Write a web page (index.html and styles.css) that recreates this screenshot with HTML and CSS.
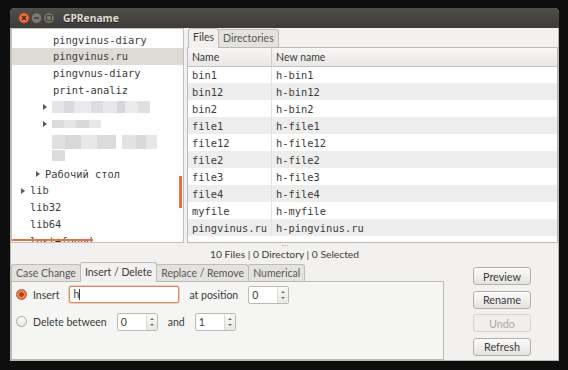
FILE: index.html
```html
<!DOCTYPE html>
<html>
<head>
<meta charset="utf-8">
<title>GPRename</title>
<link rel="stylesheet" href="styles.css">
</head>
<body>
<div class="window">
  <div class="titlebar">
    <svg class="wbtns" width="40" height="12" viewBox="0 0 40 12">
      <circle cx="6" cy="6" r="5.2" fill="#ec6d3f" stroke="#8f3f1f" stroke-width="0.8"/>
      <path d="M4 4 L8 8 M8 4 L4 8" stroke="#40200f" stroke-width="1.3"/>
      <circle cx="18.5" cy="6" r="5.2" fill="#7b7a75" stroke="#4a4944" stroke-width="0.8"/>
      <path d="M16 6 H21" stroke="#3e3d39" stroke-width="1.3"/>
      <circle cx="31" cy="6" r="5.2" fill="#7b7a75" stroke="#4a4944" stroke-width="0.8"/>
      <rect x="28.6" y="3.6" width="4.8" height="4.8" fill="none" stroke="#3e3d39" stroke-width="1"/>
    </svg>
    <span class="title">GPRename</span>
  </div>
  <div class="content">
    <div class="top">
      <div class="tree">
        <div class="row i53"><span class="exp"></span>pingvinus-diary</div>
        <div class="row i53 sel"><span class="exp"></span>pingvinus.ru</div>
        <div class="row i53"><span class="exp"></span>pingvnus-diary</div>
        <div class="row i53"><span class="exp"></span>print-analiz</div>
        <div class="row i52"><span class="exp arrow"></span><span class="blur b1"></span></div>
        <div class="row i52"><span class="exp arrow"></span><span class="blur b2"></span></div>
        <div class="row i52"><span class="exp"></span><span class="blur b3"></span><span class="blur b4"></span></div>
        <div class="row i52"><span class="exp"></span><span class="blur b5"></span></div>
        <div class="row i45"><span class="exp arrow"></span>Рабочий стол</div>
        <div class="row i30"><span class="exp arrow"></span>lib</div>
        <div class="row i30"><span class="exp"></span>lib32</div>
        <div class="row i30"><span class="exp"></span>lib64</div>
        <div class="row i30"><span class="exp"></span>lost+found</div>
        <span class="oscroll-v"></span>
        <span class="oscroll-h"></span>
      </div>
      <div class="nb files">
        <div class="tabs">
          <span class="tab active">Files</span><span class="tab">Directories</span>
        </div>
        <div class="panel">
          <table class="list">
            <thead>
              <tr><th class="c1">Name</th><th>New name</th></tr>
            </thead>
            <tbody>
              <tr><td class="c1">bin1</td><td>h-bin1</td></tr>
              <tr><td class="c1">bin12</td><td>h-bin12</td></tr>
              <tr><td class="c1">bin2</td><td>h-bin2</td></tr>
              <tr><td class="c1">file1</td><td>h-file1</td></tr>
              <tr><td class="c1">file12</td><td>h-file12</td></tr>
              <tr><td class="c1">file2</td><td>h-file2</td></tr>
              <tr><td class="c1">file3</td><td>h-file3</td></tr>
              <tr><td class="c1">file4</td><td>h-file4</td></tr>
              <tr><td class="c1">myfile</td><td>h-myfile</td></tr>
              <tr><td class="c1">pingvinus.ru</td><td>h-pingvinus.ru</td></tr>
            </tbody>
          </table>
        </div>
      </div>
    </div>
    <div class="status">
      <span class="grip"></span>
      <span class="status-text">10 Files | 0 Directory | 0 Selected</span>
    </div>
    <div class="bottom">
      <div class="nb ops">
        <div class="tabs">
          <span class="tab">Case Change</span><span class="tab active">Insert / Delete</span><span class="tab">Replace / Remove</span><span class="tab">Numerical</span>
        </div>
        <div class="panel opspanel">
          <div class="oprow">
            <span class="radio on"></span>
            <span class="lbl">Insert</span>
            <span class="entry focus">h<span class="caret"></span></span>
            <span class="lbl">at position</span>
            <span class="spin"><span class="val">0</span><span class="arrows"><i class="up"></i><i class="dn"></i></span></span>
          </div>
          <div class="oprow">
            <span class="radio"></span>
            <span class="lbl">Delete between</span>
            <span class="spin"><span class="val">0</span><span class="arrows"><i class="up"></i><i class="dn"></i></span></span>
            <span class="lbl">and</span>
            <span class="spin"><span class="val">1</span><span class="arrows"><i class="up"></i><i class="dn"></i></span></span>
          </div>
        </div>
      </div>
      <div class="actions">
        <button class="btn">Preview</button>
        <button class="btn">Rename</button>
        <button class="btn" disabled>Undo</button>
        <button class="btn">Refresh</button>
      </div>
    </div>
  </div>
</div>
</body>
</html>
```

FILE: styles.css
```css
* { box-sizing: border-box; }
html, body { margin: 0; padding: 0; }
body {
  background: #0e0e0e;
  width: 568px;
  height: 370px;
  overflow: hidden;
  font-family: Lato, "Noto Sans", sans-serif;
  font-size: 10.5px;
  color: #3c3c3c;
}
.window {
  margin: 8px 0 0 10px;
  width: 549px;
  height: 353px;
  background: #f2f1f0;
  border-radius: 5px 5px 0 0;
  overflow: hidden;
  display: flex;
  flex-direction: column;
}
.titlebar {
  height: 20px;
  flex: none;
  background: linear-gradient(#4f4e4a, #3d3c38);
  display: flex;
  align-items: center;
  padding-left: 8px;
}
.wbtns { display: block; }
.title {
  margin-left: 5px;
  color: #dfdbd2;
  font-family: "Noto Sans", sans-serif;
  font-weight: bold;
  font-size: 10.3px;
  text-shadow: 0 1px 0 #222;
}
.content {
  flex: 1;
  display: flex;
  flex-direction: column;
  border: 1px solid #bab7b1;
  border-top: none;
}
.top {
  height: 215px;
  flex: none;
  display: flex;
  gap: 3px;
}
.tree {
  position: relative;
  width: 173px;
  flex: none;
  background: #fff;
  border: 1px solid #c4c1bc;
  padding-top: 2.5px;
  overflow: hidden;
  font-family: "DejaVu Sans Mono", monospace;
  font-size: 10.4px;
}
.row {
  height: 16.75px;
  line-height: 16.75px;
  display: flex;
  align-items: center;
  white-space: nowrap;
}
.row.sel { background: #dedbd6; }
.i53 { padding-left: 31px; }
.i52 { padding-left: 30px; }
.i45 { padding-left: 23px; }
.i30 { padding-left: 8px; }
.exp {
  width: 10px;
  flex: none;
  display: flex;
  align-items: center;
  height: 100%;
}
.exp.arrow::before {
  content: "";
  display: block;
  width: 0;
  height: 0;
  margin-left: 1px;
  border-left: 4px solid #5a5a5a;
  border-top: 3px solid transparent;
  border-bottom: 3px solid transparent;
}
.blur { display: inline-block; height: 12px; }
.b1 {
  width: 98px;
  background: linear-gradient(90deg, #e4e5e8 0 12%, #d9dadd 12% 22%, #e9eaec 22% 40%, #dcdde0 40% 52%, #e6e7e9 52% 66%, #d6d7da 66% 74%, #ebebed 74% 88%, #dedfe1 88% 100%);
}
.b2 {
  width: 49px;
  height: 8px;
  background: linear-gradient(90deg, #dcdcde 0 25%, #e6e6e8 25% 50%, #d8d8da 50% 75%, #e8e8ea 75% 100%);
}
.b3 {
  width: 64px;
  height: 14px;
  margin-top: 3px;
  background: linear-gradient(90deg, #e0e0e2 0 20%, #d8d8da 20% 45%, #e8e8ea 45% 70%, #dbdbdd 70% 100%);
}
.b4 {
  width: 35px;
  height: 14px;
  margin-left: 6px;
  margin-top: 3px;
  background: linear-gradient(90deg, #e2e2e4 0 40%, #d9d9db 40% 70%, #e7e7e9 70% 100%);
}
.b5 {
  width: 13px;
  height: 11px;
  margin-top: -4px;
  background: #dcdcde;
}
.oscroll-v {
  position: absolute;
  left: 167px;
  top: 147px;
  width: 3px;
  height: 32px;
  background: #e9703f;
}
.oscroll-h {
  position: absolute;
  left: 0;
  bottom: 1px;
  width: 81px;
  height: 2px;
  background: #e9703f;
}
.nb {
  display: flex;
  flex-direction: column;
}
.files { flex: 1; }
.tabs {
  display: flex;
  align-items: flex-end;
  height: 19px;
  flex: none;
  padding-left: 1px;
  position: relative;
  z-index: 1;
}
.tab {
  height: 18px;
  padding: 0 4px;
  line-height: 17px;
  background: #e4e2df;
  color: #585858;
  border: 1px solid #c0bdb8;
  border-bottom: none;
  border-radius: 3px 3px 0 0;
  white-space: nowrap;
}
.tab + .tab { margin-left: -1px; }
.tab.active {
  height: 20px;
  margin-bottom: -1px;
  background: #f2f1f0;
  color: #3c3c3c;
}
.panel {
  flex: 1;
  border: 1px solid #bcb9b3;
  background: #fff;
  overflow: hidden;
}
.list {
  width: 100%;
  border-collapse: collapse;
  font-family: "DejaVu Sans Mono", monospace;
  font-size: 10.4px;
}
.list th {
  height: 18px;
  text-align: left;
  font-family: Lato, "Noto Sans", sans-serif;
  font-weight: normal;
  font-size: 10.5px;
  padding: 0 4px;
  background: linear-gradient(#f7f6f5, #e8e7e5);
  border-bottom: 1px solid #c4c2bd;
}
.list th.c1 { border-right: 1px solid #d2d0cb; }
.list td {
  height: 17px;
  padding: 0 4px;
  white-space: nowrap;
}
.list td.c1 { width: 81px; border-right: 1px solid #e2e2e2; }
.list tbody tr:nth-child(even) { background: #ededed; }
.status {
  height: 19px;
  flex: none;
  display: flex;
  flex-direction: column;
  align-items: center;
  padding-top: 2px;
}
.grip {
  width: 6px;
  height: 2px;
  border-top: 1px dotted #b8b6b1;
}
.status-text { line-height: 13px; margin-top: 1px; font-size: 10.3px; }
.bottom {
  flex: 1;
  display: flex;
}
.ops { width: 433px; flex: none; }
.ops .tabs { padding-left: 0; }
.ops .tab { height: 17px; line-height: 16px; padding: 0 4px; }
.ops .tab.active { height: 20px; line-height: 19px; }
.opspanel {
  background: #f5f5f4;
  padding: 4px 0 0 4px;
  display: flex;
  flex-direction: column;
  gap: 10px;
}
.oprow {
  display: flex;
  align-items: center;
  height: 17px;
  gap: 10px;
}
.radio {
  width: 11px;
  height: 11px;
  border-radius: 50%;
  border: 1px solid #a8a5a0;
  background: linear-gradient(#fdfdfd, #e9e8e6);
  margin-right: -4px;
  flex: none;
}
.radio.on {
  border-color: #b9552c;
  background: radial-gradient(circle, #a8431d 0 2px, #f38a5e 2.5px, #e8683a 100%);
}
.entry {
  width: 110px;
  height: 17px;
  border: 1px solid #d9896a;
  border-radius: 2px;
  background: #fff;
  box-shadow: 0 0 0 0.5px #efa889;
  padding-left: 3px;
  line-height: 15px;
  display: flex;
  align-items: center;
}
.caret {
  display: inline-block;
  width: 1px;
  height: 11px;
  background: #3c3c3c;
  margin-left: 0;
}
.spin {
  width: 41px;
  height: 18px;
  border: 1px solid #bdbab4;
  border-radius: 2px;
  background: #fff;
  display: flex;
}
.spin .val {
  flex: 1;
  padding-left: 3px;
  line-height: 16px;
}
.spin .arrows {
  width: 11px;
  border-left: 1px solid #dcdad6;
  background: linear-gradient(#f8f8f7, #e9e8e6);
  display: flex;
  flex-direction: column;
  align-items: center;
  justify-content: center;
  gap: 4px;
}
.arrows i {
  width: 0;
  height: 0;
  border-left: 2px solid transparent;
  border-right: 2px solid transparent;
}
.arrows .up { border-bottom: 2px solid #6a6a6a; }
.arrows .dn { border-top: 2px solid #6a6a6a; }
.actions {
  margin-left: 29px;
  padding-top: 5px;
  display: flex;
  flex-direction: column;
  gap: 5.6px;
}
.btn {
  width: 58px;
  height: 18px;
  padding: 0;
  border: 1px solid #b4b1ab;
  border-radius: 3px;
  background: linear-gradient(#fbfbfa, #e4e2df);
  font-family: Lato, "Noto Sans", sans-serif;
  font-size: 10.8px;
  color: #3c3c3c;
}
.btn:disabled {
  color: #aaa8a4;
  border-color: #d7d4cf;
  background: #f0efed;
}
```
